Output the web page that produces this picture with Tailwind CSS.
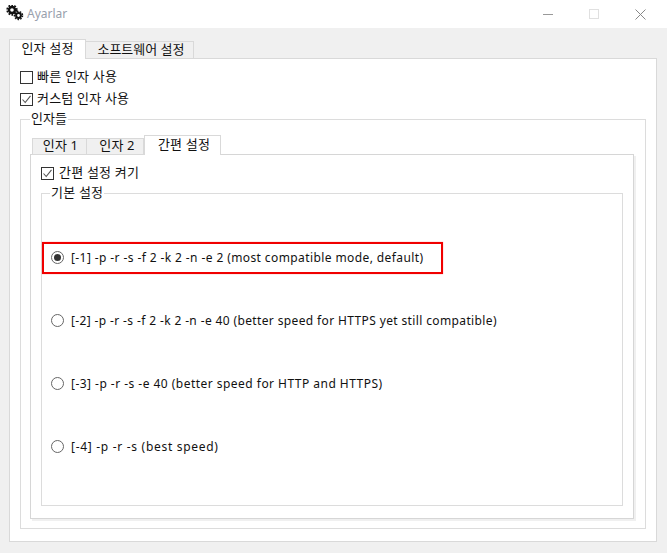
<!DOCTYPE html>
<html lang="ko">
<head>
  <meta charset="UTF-8" />
  <title>Ayarlar</title>
  <script src="https://cdn.jsdelivr.net/npm/@tailwindcss/browser@4"></script>
</head>
<body class="w-[667px] h-[553px] overflow-hidden bg-[#f0f0f0] text-[13px] leading-[16px] text-[#111] font-['Noto_Sans','Noto_Sans_CJK_KR',sans-serif]">
  <!-- title bar -->
  <div class="h-[28px] bg-white flex items-center pl-[6px]">
    <svg width="18" height="18" viewBox="0 0 18 18" class="mr-[3px]">
      <circle cx="6" cy="5" r="3" fill="none" stroke="#111" stroke-width="2.4"/>
      <circle cx="6" cy="5" r="4.8" fill="none" stroke="#111" stroke-width="1.8" stroke-dasharray="1.8 1.25"/>
      <circle cx="12.5" cy="10.5" r="2.4" fill="none" stroke="#111" stroke-width="2"/>
      <circle cx="12.5" cy="10.5" r="4" fill="none" stroke="#111" stroke-width="1.5" stroke-dasharray="1.6 1.2"/>
    </svg>
    <span class="text-[12px] text-[#98a0ac]">Ayarlar</span>
    <div class="ml-auto flex items-center">
      <div class="w-[10px] h-px bg-[#999] mr-[36px]"></div>
      <div class="w-[10px] h-[10px] border border-[#e0e0e0] mr-[36px]"></div>
      <svg width="11" height="11" viewBox="0 0 11 11" class="mr-[21px]"><path d="M0.5 0.5L10.5 10.5M10.5 0.5L0.5 10.5" stroke="#888" fill="none"/></svg>
    </div>
  </div>

  <div class="pt-[11px] px-[9px] mr-[1px]">
    <!-- outer tabs -->
    <div class="flex items-end h-[20px] relative z-10">
      <div class="w-[77px] h-[20px] pb-[4px] bg-white border border-b-0 border-[#d9d9d9] flex items-center justify-center tracking-[0.2px]">인자 설정</div>
      <div class="w-[108px] h-[18px] pb-[2px] pl-[3px] bg-[#f0f0f0] border border-l-0 border-[#d9d9d9] flex items-center justify-center">소프트웨어 설정</div>
    </div>
    <div class="h-[484px] -mt-px bg-white border border-[#d9d9d9] pt-[11px] px-[10px]">
      <label class="flex items-center h-[14px] gap-[4px] tracking-[0.2px]">
        <span class="w-[13px] h-[13px] border border-[#333] bg-white"></span>
        <span class="pb-[2px]">빠른 인자 사용</span>
      </label>
      <label class="flex items-center h-[14px] gap-[4px] mt-[8px] tracking-[0.2px]">
        <span class="w-[13px] h-[13px] border border-[#333] bg-white flex items-center justify-center">
          <svg width="11" height="11" viewBox="0 0 11 11"><path d="M1.5 5.5L4.2 8.5L9.5 1.8" fill="none" stroke="#555" stroke-width="1.1"/></svg>
        </span>
        <span class="pb-[2px]">커스텀 인자 사용</span>
      </label>

      <!-- group 인자들 -->
      <div class="relative mt-[13px] h-[410px] border border-[#dcdcdc] pt-[15px] pl-[9px] pr-[11px]">
        <span class="absolute left-[9px] top-[-10px] bg-white px-[1px]">인자들</span>
        <!-- inner tabs -->
        <div class="flex items-end h-[20px] pl-[2px] relative z-10 tracking-[0.2px]">
          <div class="w-[55px] h-[17px] pb-[3px] pl-[2px] bg-[#f0f0f0] border border-[#d9d9d9] flex items-center justify-center">인자 1</div>
          <div class="w-[57px] h-[17px] pb-[3px] pl-[4px] bg-[#f0f0f0] border border-l-0 border-[#d9d9d9] flex items-center justify-center">인자 2</div>
          <div class="w-[77px] h-[20px] pb-[4px] pl-[3px] bg-white border border-b-0 border-[#d9d9d9] flex items-center justify-center">간편 설정</div>
        </div>
        <div class="h-[365px] -mt-px bg-white border border-[#d6d6d6] shadow-[2px_2px_0_#f0f0f0] pt-[11px] pl-[10px] pr-[10px]">
          <label class="flex items-center h-[14px] gap-[5px] tracking-[0.2px]">
            <span class="w-[13px] h-[13px] border border-[#333] bg-white flex items-center justify-center">
              <svg width="11" height="11" viewBox="0 0 11 11"><path d="M1.5 5.5L4.2 8.5L9.5 1.8" fill="none" stroke="#555" stroke-width="1.1"/></svg>
            </span>
            <span class="pb-[2px]">간편 설정 켜기</span>
          </label>

          <!-- group 기본 설정 -->
          <div class="relative mt-[13px] h-[313px] border border-[#dcdcdc] pl-[9px] pt-[56px]">
            <span class="absolute left-[8px] top-[-10px] bg-white px-[1px] tracking-[0.2px]">기본 설정</span>
            <!-- highlight over the first option -->
            <div class="absolute left-0 top-[48px] w-[401px] h-[32px] border-2 border-[#f00000] shadow-[0_0_1px_#ff8080]"></div>
            <div class="flex flex-col gap-[49px] text-[12px]">
              <label class="flex items-center h-[14px] gap-[7px]">
                <span class="w-[13px] h-[13px] rounded-full border border-[#666] bg-white flex items-center justify-center"><span class="w-[7px] h-[7px] rounded-full bg-[#333]"></span></span>
                <span class="pt-[2px] tracking-[0.4px]">[-1] -p -r -s -f 2 -k 2 -n -e 2 (most compatible mode, default)</span>
              </label>
              <label class="flex items-center h-[14px] gap-[7px]">
                <span class="w-[13px] h-[13px] rounded-full border border-[#666] bg-white"></span>
                <span class="pt-[2px] tracking-[0.37px]">[-2] -p -r -s -f 2 -k 2 -n -e 40 (better speed for HTTPS yet still compatible)</span>
              </label>
              <label class="flex items-center h-[14px] gap-[7px]">
                <span class="w-[13px] h-[13px] rounded-full border border-[#666] bg-white"></span>
                <span class="pt-[2px] tracking-[0.47px]">[-3] -p -r -s -e 40 (better speed for HTTP and HTTPS)</span>
              </label>
              <label class="flex items-center h-[14px] gap-[7px]">
                <span class="w-[13px] h-[13px] rounded-full border border-[#666] bg-white"></span>
                <span class="pt-[2px] tracking-[0.7px]">[-4] -p -r -s (best speed)</span>
              </label>
            </div>
          </div>
        </div>
      </div>
    </div>
  </div>
</body>
</html>
